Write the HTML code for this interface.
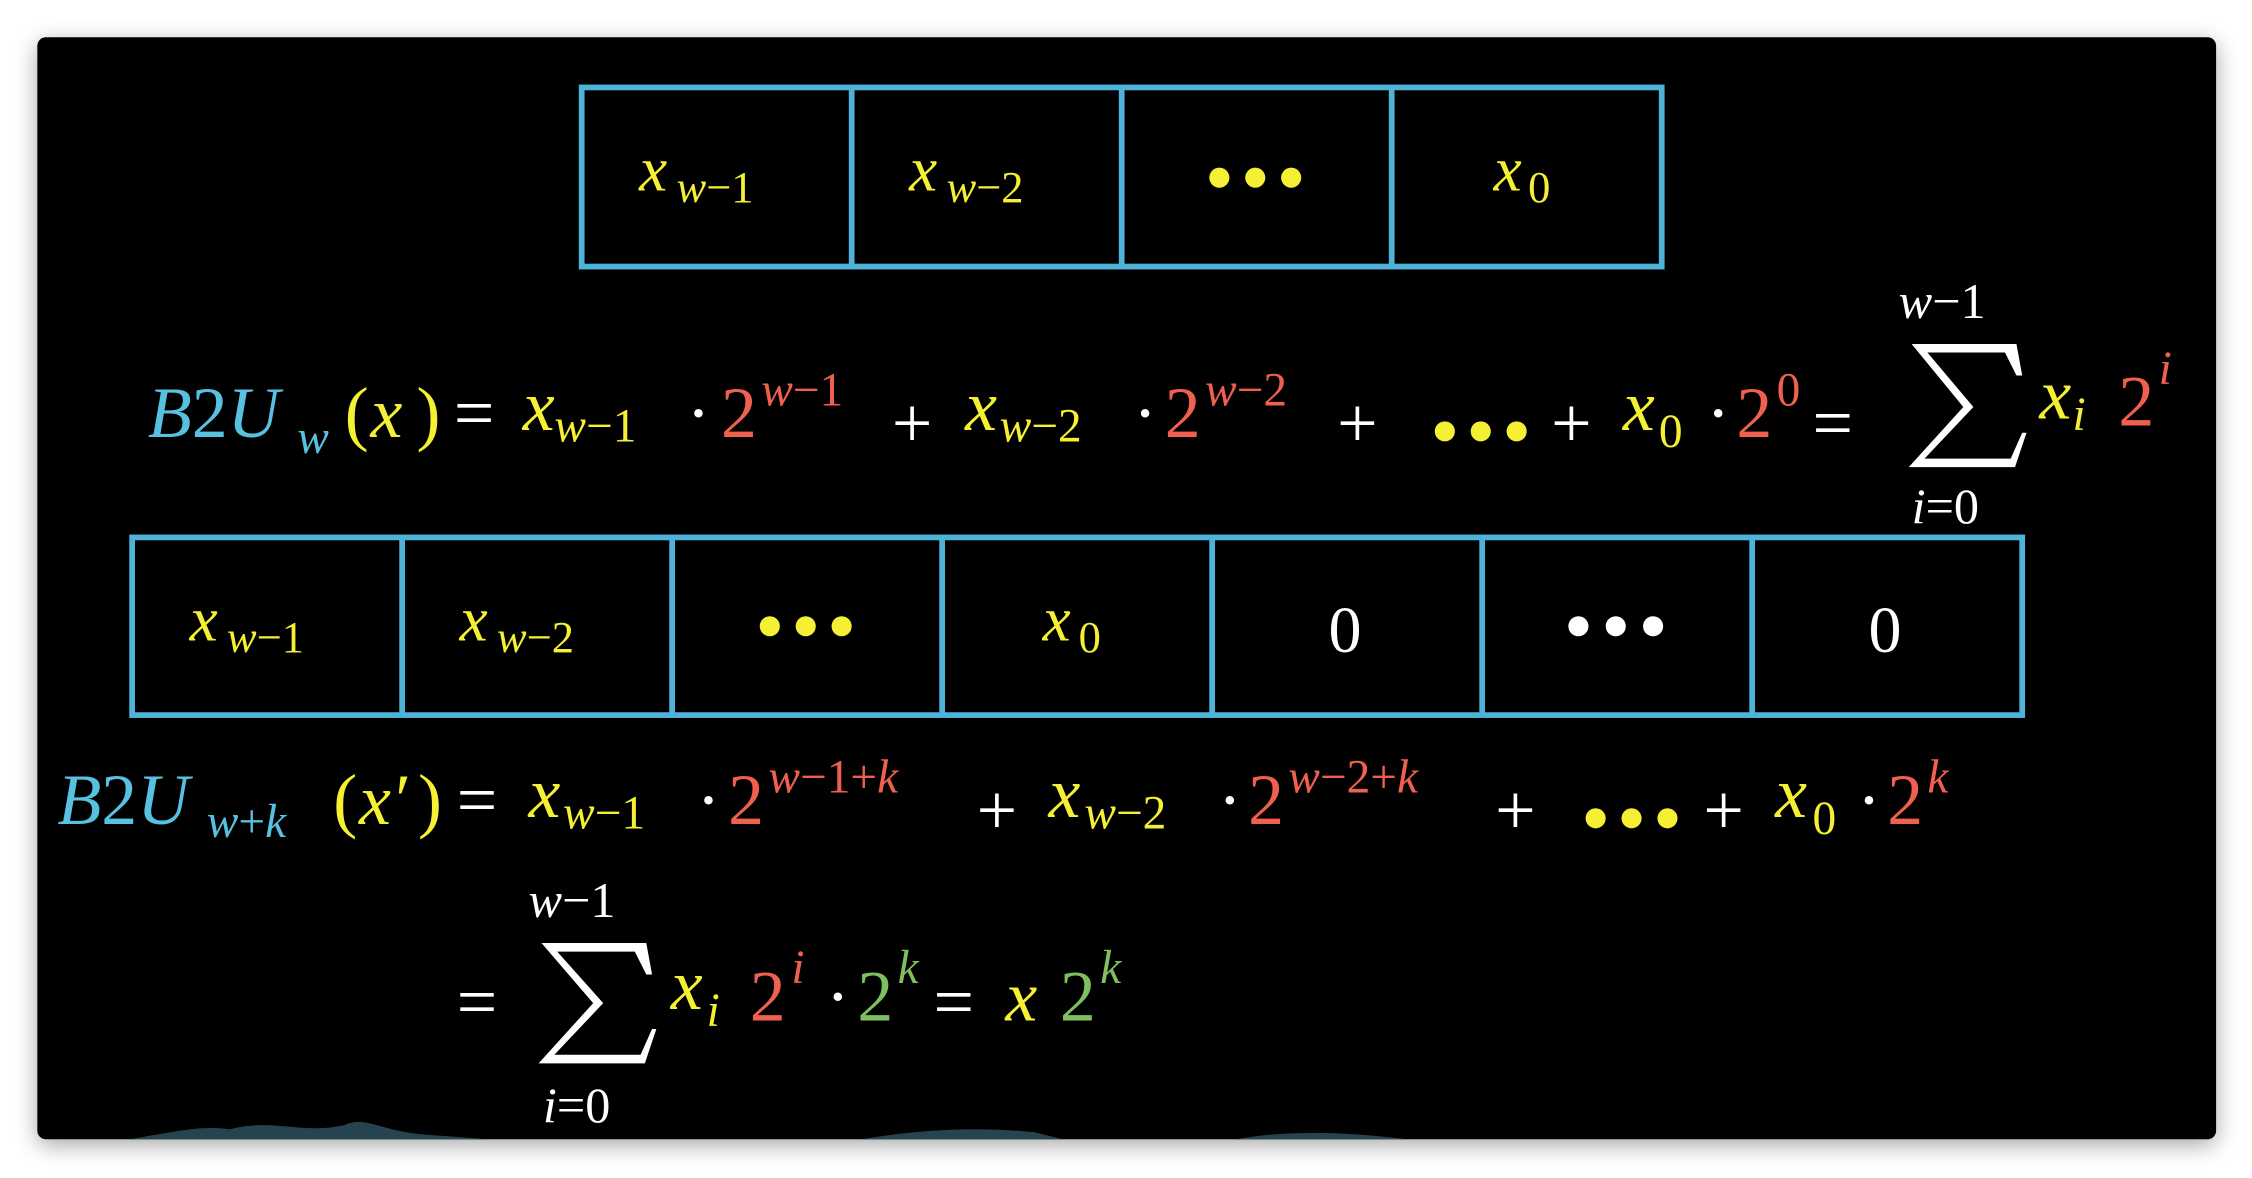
<!DOCTYPE html>
<html><head><meta charset="utf-8"><style>
html,body{margin:0;padding:0;background:#fff;width:2252px;height:1178px;overflow:hidden}
svg{display:block}
svg text{font-family:"Liberation Serif","DejaVu Serif","Times New Roman",serif}
.i{font-style:italic}
.y{fill:#f5f033}.b{fill:#58c0e0}.r{fill:#f0604f}.g{fill:#7fbf5f}.w{fill:#fff}
</style></head><body>
<svg width="2252" height="1178" viewBox="0 0 1568 822" preserveAspectRatio="none" font-family="Liberation Serif, DejaVu Serif, serif">
<defs><filter id="sh" x="-5%" y="-5%" width="110%" height="115%"><feGaussianBlur stdDeviation="8"/></filter></defs>
<rect x="26" y="30" width="1517" height="769" rx="6" fill="#000" opacity="0.35" filter="url(#sh)"/>
<rect x="26" y="26" width="1517" height="769" rx="6" fill="#000"/>
<path d="M90,795 C120,790 140,785 160,788 C190,780 210,792 240,785 C255,778 265,790 300,792 L340,795 Z" fill="#26444f"/>
<path d="M600,795 C640,788 680,786 720,790 L740,795 Z M860,795 C900,788 940,790 980,795 Z" fill="#26444f"/>
<g fill="none" stroke="#4fb3d9" stroke-width="4">
<rect x="405" y="61" width="752" height="125"/>
<line x1="593" y1="61" x2="593" y2="186"/><line x1="781" y1="61" x2="781" y2="186"/><line x1="969" y1="61" x2="969" y2="186"/>
<rect x="92" y="375" width="1316" height="124"/>
<line x1="280" y1="375" x2="280" y2="499"/><line x1="468" y1="375" x2="468" y2="499"/><line x1="656" y1="375" x2="656" y2="499"/><line x1="844" y1="375" x2="844" y2="499"/><line x1="1032" y1="375" x2="1032" y2="499"/><line x1="1220" y1="375" x2="1220" y2="499"/>
</g>
<g font-size="44">
<text x="445" y="133" class="i y">x</text><text x="471" y="141" font-size="31" class="y"><tspan class="i">w</tspan>−1</text>
<text x="633" y="133" class="i y">x</text><text x="659" y="141" font-size="31" class="y"><tspan class="i">w</tspan>−2</text>
<text x="1040" y="133" class="i y">x</text><text x="1064" y="141" font-size="31" class="y">0</text>
</g>
<g class="y"><circle cx="849" cy="124" r="7"/><circle cx="874" cy="124" r="7"/><circle cx="899" cy="124" r="7"/></g>
<g font-size="44">
<text x="132" y="447" class="i y">x</text><text x="158" y="455" font-size="31" class="y"><tspan class="i">w</tspan>−1</text>
<text x="320" y="447" class="i y">x</text><text x="346" y="455" font-size="31" class="y"><tspan class="i">w</tspan>−2</text>
<text x="726" y="447" class="i y">x</text><text x="751" y="455" font-size="31" class="y">0</text>
<text x="925" y="455" font-size="46" class="w">0</text>
<text x="1301" y="455" font-size="46" class="w">0</text>
</g>
<g class="y"><circle cx="536" cy="437" r="7"/><circle cx="561" cy="437" r="7"/><circle cx="586" cy="437" r="7"/></g>
<g class="w"><circle cx="1099" cy="437" r="7"/><circle cx="1125" cy="437" r="7"/><circle cx="1151" cy="437" r="7"/></g>
<g font-size="50">
<text x="103" y="305" class="i b">B<tspan font-style="normal">2</tspan>U</text>
<text x="207" y="316" font-size="33" class="i b">w</text>
<text x="240" y="305" class="y">(</text><text x="258" y="305" class="i y">x</text><text x="290" y="305" class="y">)</text>
<text x="316" y="305" class="w">=</text>
<text x="364" y="300" class="i y">x</text><text x="386" y="308" font-size="33" class="y"><tspan class="i">w</tspan>−1</text>
<text x="478" y="305" class="w">·</text>
<text x="502" y="305" class="r">2</text><text x="530" y="283" font-size="33" class="r"><tspan class="i">w</tspan>−1</text>
<text x="621" y="312" class="w">+</text>
<text x="672" y="300" class="i y">x</text><text x="696" y="308" font-size="33" class="y"><tspan class="i">w</tspan>−2</text>
<text x="789" y="305" class="w">·</text>
<text x="811" y="305" class="r">2</text><text x="839" y="283" font-size="33" class="r"><tspan class="i">w</tspan>−2</text>
<text x="931" y="312" class="w">+</text>
<text x="1080" y="312" class="w">+</text>
<text x="1130" y="300" class="i y">x</text><text x="1155" y="312" font-size="33" class="y">0</text>
<text x="1188" y="305" class="w">·</text>
<text x="1209" y="305" class="r">2</text><text x="1237" y="283" font-size="33" class="r">0</text>
<text x="1262" y="312" class="w">=</text>
<text x="1322" y="222" font-size="35" class="w"><tspan class="i">w</tspan>−1</text>
<text x="1331" y="365" font-size="35" class="w"><tspan class="i">i</tspan>=0</text>
<text x="1420" y="292" class="i y">x</text><text x="1443" y="300" font-size="33" class="i y">i</text>
<text x="1475" y="297" class="r">2</text><text x="1503" y="268" font-size="33" class="i r">i</text>
</g>
<g class="y"><circle cx="1006" cy="301" r="7"/><circle cx="1031" cy="301" r="7"/><circle cx="1056" cy="301" r="7"/></g>
<polygon class="w" points="1331,240 1404,240 1408,262 1404,262 1396,246 1342,246 1374,284 1340,320 1400,320 1408,302 1411,302 1403,326 1329,326 1367,284"/>
<g font-size="50">
<text x="40" y="575" class="i b">B<tspan font-style="normal">2</tspan>U</text>
<text x="144" y="584" font-size="33" class="b"><tspan class="i">w</tspan>+<tspan class="i">k</tspan></text>
<text x="232" y="575" class="y">(</text><text x="250" y="575" class="i y">x′</text><text x="291" y="575" class="y">)</text>
<text x="318" y="575" class="w">=</text>
<text x="368" y="570" class="i y">x</text><text x="392" y="578" font-size="33" class="y"><tspan class="i">w</tspan>−1</text>
<text x="485" y="575" class="w">·</text>
<text x="507" y="575" class="r">2</text><text x="535" y="553" font-size="33" class="r"><tspan class="i">w</tspan>−1+<tspan class="i">k</tspan></text>
<text x="680" y="582" class="w">+</text>
<text x="730" y="570" class="i y">x</text><text x="755" y="578" font-size="33" class="y"><tspan class="i">w</tspan>−2</text>
<text x="848" y="575" class="w">·</text>
<text x="869" y="575" class="r">2</text><text x="897" y="553" font-size="33" class="r"><tspan class="i">w</tspan>−2+<tspan class="i">k</tspan></text>
<text x="1041" y="582" class="w">+</text>
<text x="1186" y="582" class="w">+</text>
<text x="1236" y="570" class="i y">x</text><text x="1262" y="582" font-size="33" class="y">0</text>
<text x="1293" y="575" class="w">·</text>
<text x="1314" y="575" class="r">2</text><text x="1342" y="553" font-size="33" class="i r">k</text>
</g>
<g class="y"><circle cx="1111" cy="571" r="7"/><circle cx="1136" cy="571" r="7"/><circle cx="1161" cy="571" r="7"/></g>
<g font-size="50">
<text x="318" y="716" class="w">=</text>
<text x="368" y="640" font-size="35" class="w"><tspan class="i">w</tspan>−1</text>
<text x="378" y="783" font-size="35" class="w"><tspan class="i">i</tspan>=0</text>
<text x="467" y="704" class="i y">x</text><text x="492" y="716" font-size="33" class="i y">i</text>
<text x="522" y="712" class="r">2</text><text x="551" y="686" font-size="33" class="i r">i</text>
<text x="575" y="712" class="w">·</text>
<text x="597" y="712" class="g">2</text><text x="625" y="686" font-size="33" class="i g">k</text>
<text x="650" y="716" class="w">=</text>
<text x="700" y="712" class="i y">x</text>
<text x="738" y="712" class="g">2</text><text x="766" y="686" font-size="33" class="i g">k</text>
</g>
<polygon class="w" points="377,658 450,658 454,680 450,680 442,664 388,664 420,700 386,736 446,736 454,718 457,718 449,742 375,742 413,700"/>
</svg>
</body></html>
